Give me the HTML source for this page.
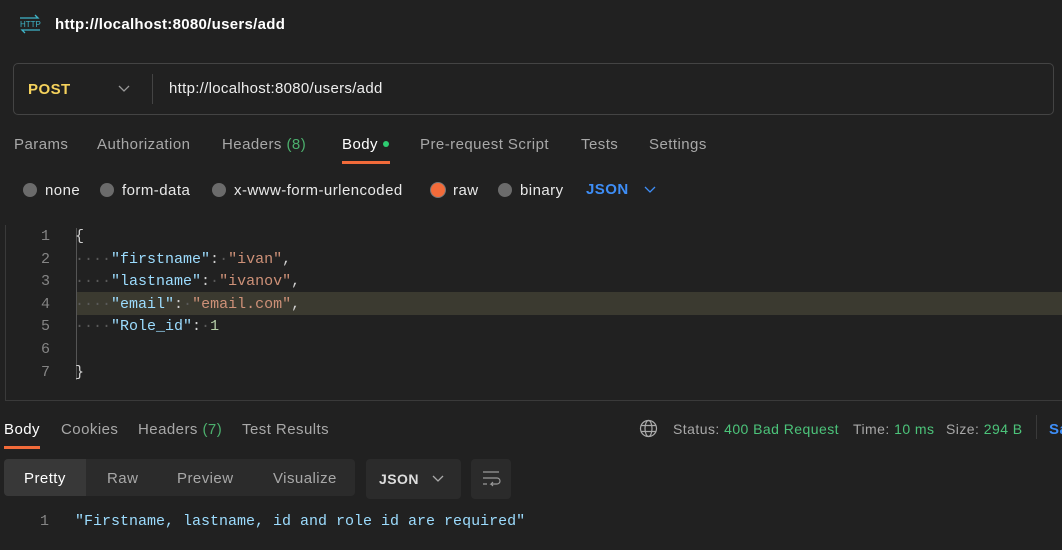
<!DOCTYPE html>
<html><head><meta charset="utf-8"><style>
*{margin:0;padding:0;box-sizing:border-box}
body{width:1062px;height:550px;background:#212121;font-family:"Liberation Sans",sans-serif;color:#d0d0d0;position:relative;overflow:hidden;letter-spacing:0.45px}
.a{position:absolute;white-space:nowrap}
.mono{font-family:"Liberation Mono",monospace;font-size:15px;letter-spacing:0}
.k{color:#9cdcfe}.s{color:#ce9178}.n{color:#b5cea8}.d{color:#5a5a5a}
.ln{color:#858585;width:20px;text-align:right}
.radio{display:inline-block;width:14px;height:14px;border-radius:50%;background:#6b6b6b;vertical-align:-2px;margin-right:8px}
</style></head><body>
<svg class="a" style="left:18px;top:14px" width="24" height="20" viewBox="0 0 24 20"><g stroke="#3fb5c9" fill="none" stroke-width="1.3"><path d="M2 4h18l-3-3M22 16H4l3 3"/></g><text x="2" y="13" font-size="8" fill="#3fb5c9" font-family="Liberation Sans" letter-spacing="0">HTTP</text></svg>
<div class="a" style="left:55px;top:16px;font-size:15px;font-weight:bold;color:#fff;letter-spacing:0.3px">http://localhost:8080/users/add</div>
<div class="a" style="left:13px;top:63px;width:1041px;height:52px;border:1px solid #444;border-radius:5px"></div>
<div class="a" style="left:28px;top:81px;font-size:15px;font-weight:bold;color:#f5d25c">POST</div>
<svg class="a" style="left:118px;top:85px" width="12" height="8"><path d="M1 1l5 5 5-5" stroke="#999" fill="none" stroke-width="1.3"/></svg>
<div class="a" style="left:152px;top:74px;width:1px;height:30px;background:#444"></div>
<div class="a" style="left:169px;top:80px;font-size:15px;color:#eee;letter-spacing:0.3px">http://localhost:8080/users/add</div>
<div class="a" style="top:136px;font-size:15px;color:#a8a8a8;left:14px">Params</div>
<div class="a" style="top:136px;font-size:15px;color:#a8a8a8;left:97px">Authorization</div>
<div class="a" style="top:136px;font-size:15px;color:#a8a8a8;left:222px">Headers <span style="color:#4caf6d">(8)</span></div>
<div class="a" style="top:136px;font-size:15px;color:#fff;left:342px">Body <span style="display:inline-block;width:6px;height:6px;border-radius:50%;background:#2ecc71;vertical-align:2px"></span></div>
<div class="a" style="left:342px;top:161px;width:48px;height:3px;background:#f26b3a"></div>
<div class="a" style="top:136px;font-size:15px;color:#a8a8a8;left:420px">Pre-request Script</div>
<div class="a" style="top:136px;font-size:15px;color:#a8a8a8;left:581px">Tests</div>
<div class="a" style="top:136px;font-size:15px;color:#a8a8a8;left:649px">Settings</div>
<div class="a" style="top:182px;font-size:15px;color:#e8e8e8;left:23px"><span class="radio"></span>none</div>
<div class="a" style="top:182px;font-size:15px;color:#e8e8e8;left:100px"><span class="radio"></span>form-data</div>
<div class="a" style="top:182px;font-size:15px;color:#e8e8e8;left:212px"><span class="radio"></span>x-www-form-urlencoded</div>
<div class="a" style="top:182px;font-size:15px;color:#e8e8e8;left:431px"><span class="radio" style="background:#f26b3a;box-shadow:0 0 0 1px #777"></span>raw</div>
<div class="a" style="top:182px;font-size:15px;color:#e8e8e8;left:498px"><span class="radio"></span>binary</div>
<div class="a" style="top:181px;font-size:15px;font-weight:bold;color:#3e8ef7;left:586px">JSON</div>
<svg class="a" style="left:644px;top:186px" width="12" height="8"><path d="M1 1l5 5 5-5" stroke="#3e8ef7" fill="none" stroke-width="1.3"/></svg>
<div class="a" style="left:5px;top:225px;width:1px;height:176px;background:#3a3a3a"></div>
<div class="a" style="left:5px;top:400px;width:1057px;height:1px;background:#3a3a3a"></div>
<div class="a" style="left:76px;top:292px;width:986px;height:23px;background:#3b3a30"></div>
<div class="a" style="left:76px;top:228px;width:1px;height:152px;background:#555"></div>
<div class="a mono" style="left:20px;top:226px;line-height:22.6px">
<div><span class="a ln" style="left:10px">1</span><span class="a" style="left:55px">{</span></div><br>
<div><span class="a ln" style="left:10px">2</span><span class="a" style="left:55px"><span class="d">····</span><span class="k">"firstname"</span>:<span class="d">·</span><span class="s">"ivan"</span>,</span></div><br>
<div><span class="a ln" style="left:10px">3</span><span class="a" style="left:55px"><span class="d">····</span><span class="k">"lastname"</span>:<span class="d">·</span><span class="s">"ivanov"</span>,</span></div><br>
<div><span class="a ln" style="left:10px">4</span><span class="a" style="left:55px"><span class="d">····</span><span class="k">"email"</span>:<span class="d">·</span><span class="s">"email.com"</span>,</span></div><br>
<div><span class="a ln" style="left:10px">5</span><span class="a" style="left:55px"><span class="d">····</span><span class="k">"Role_id"</span>:<span class="d">·</span><span class="n">1</span></span></div><br>
<div><span class="a ln" style="left:10px">6</span></div><br>
<div><span class="a ln" style="left:10px">7</span><span class="a" style="left:55px">}</span></div>
</div>
<div class="a" style="top:421px;font-size:15px;color:#fff;left:4px">Body</div>
<div class="a" style="left:4px;top:446px;width:36px;height:3px;background:#f26b3a"></div>
<div class="a" style="top:421px;font-size:15px;color:#a8a8a8;left:61px">Cookies</div>
<div class="a" style="top:421px;font-size:15px;color:#a8a8a8;left:138px">Headers <span style="color:#4caf6d">(7)</span></div>
<div class="a" style="top:421px;font-size:15px;color:#a8a8a8;left:242px">Test Results</div>
<svg class="a" style="left:639px;top:419px" width="19" height="19" viewBox="0 0 19 19"><g stroke="#aaa" fill="none" stroke-width="1.2"><circle cx="9.5" cy="9.5" r="8"/><ellipse cx="9.5" cy="9.5" rx="3.5" ry="8"/><path d="M1.5 6.5h16M1.5 12.5h16"/></g></svg>
<div class="a" style="top:421px;font-size:14px;color:#a8a8a8;left:673px">Status: <span style="color:#4cc47a">400 Bad Request</span></div>
<div class="a" style="top:421px;font-size:14px;color:#a8a8a8;left:853px">Time: <span style="color:#4cc47a">10 ms</span></div>
<div class="a" style="top:421px;font-size:14px;color:#a8a8a8;left:946px">Size: <span style="color:#4cc47a">294 B</span></div>
<div class="a" style="left:1036px;top:415px;width:1px;height:24px;background:#3a3a3a"></div>
<div class="a" style="top:421px;font-size:15px;font-weight:bold;color:#3e8ef7;left:1049px">Sa</div>
<div class="a" style="left:4px;top:459px;width:351px;height:37px;background:#2b2b2b;border-radius:4px"></div>
<div class="a" style="left:4px;top:459px;width:82px;height:37px;background:#383838;border-radius:4px 0 0 4px"></div>
<div class="a" style="top:470px;font-size:15px;color:#fff;left:24px">Pretty</div>
<div class="a" style="top:470px;font-size:15px;color:#a8a8a8;left:107px">Raw</div>
<div class="a" style="top:470px;font-size:15px;color:#a8a8a8;left:177px">Preview</div>
<div class="a" style="top:470px;font-size:15px;color:#a8a8a8;left:273px">Visualize</div>
<div class="a" style="left:366px;top:459px;width:95px;height:40px;background:#2b2b2b;border-radius:4px"></div>
<div class="a" style="top:471px;font-size:14px;font-weight:bold;color:#ddd;left:379px">JSON</div>
<svg class="a" style="left:432px;top:475px" width="12" height="8"><path d="M1 1l5 5 5-5" stroke="#aaa" fill="none" stroke-width="1.3"/></svg>
<div class="a" style="left:471px;top:459px;width:40px;height:40px;background:#2b2b2b;border-radius:4px"></div>
<svg class="a" style="left:481px;top:469px" width="20" height="20"><g stroke="#999" fill="none" stroke-width="1.2"><path d="M2 3h16M2 9h14a3 3 0 0 1 0 6h-6l2-2M10 15l2 2M2 15h4"/></g></svg>
<div class="a mono" style="left:40px;top:513px;color:#858585">1</div>
<div class="a mono k" style="left:75px;top:513px">"Firstname, lastname, id and role id are required"</div>
</body></html>
